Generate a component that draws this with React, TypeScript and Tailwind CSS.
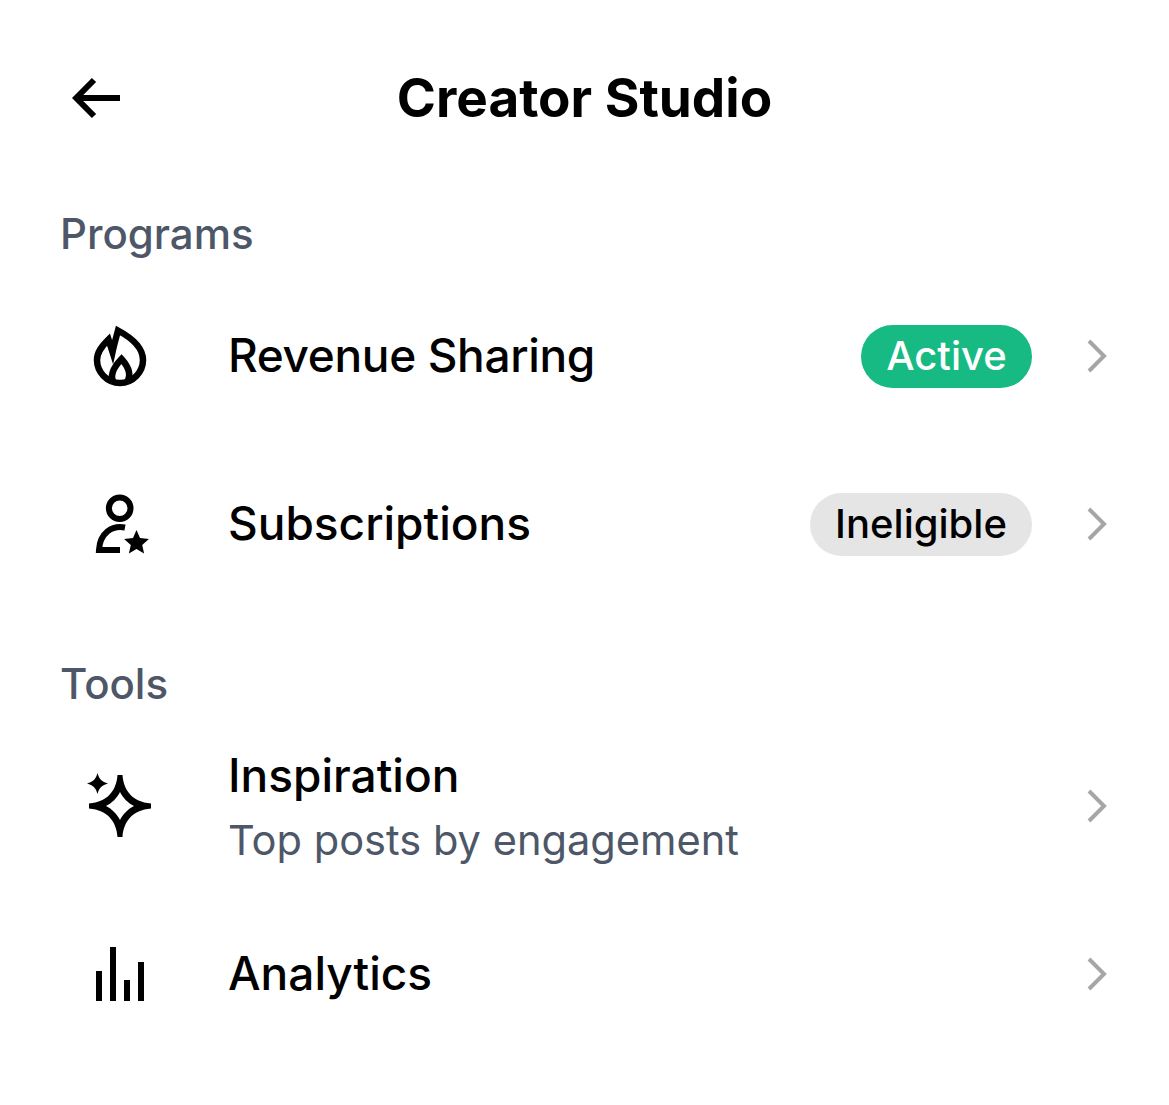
import type { ReactNode } from 'react';

function Chevron() {
  return (
    <svg width="24" height="36" viewBox="0 0 24 36" fill="none" className="shrink-0">
      <path d="M4 3L19 18L4 33" stroke="#a6a6a6" strokeWidth="4" />
    </svg>
  );
}

function FlameIcon() {
  return (
    <svg width="72" height="72" viewBox="0 0 72 72" fill="none" stroke="#000" strokeWidth="6.5" strokeMiterlimit="10">
      <path d="M36 63C23 63 13 52 13 40C13 32 18 26 24.5 19.5L28.5 32C30 25 32 18 34 10.5C48 18 59 28 59 40C59 52 49 63 36 63Z" />
      <path d="M29.5 62C26 56 29 48 37.5 39C45.5 48 47 56 43 62" />
    </svg>
  );
}

function CreatorIcon() {
  return (
    <svg width="72" height="72" viewBox="0 0 72 72" fill="none">
      <circle cx="35.7" cy="20.3" r="10.8" stroke="#000" strokeWidth="6" />
      <path d="M41 39.5C28 37 16 45 15 62H36" stroke="#000" strokeWidth="6" />
      <polygon
        points="52.5,42 56,50.1 64.9,51 58.2,56.9 60.1,65.5 52.5,61 44.9,65.5 46.8,56.9 40.1,51 49,50.1"
        fill="#000"
      />
    </svg>
  );
}

function SparkleIcon() {
  return (
    <svg width="72" height="72" viewBox="0 0 72 72" fill="none">
      <path
        fillRule="evenodd"
        d="M33.5 5H38.5C39.5 20 48 32 67 33.5V38.5C48 40 39.5 52 38.5 67H33.5C32.5 52 24 40 5 38.5V33.5C24 32 32.5 20 33.5 5ZM36 22C39 28 44 33 50 36C44 39 39 44 36 50C33 44 28 39 22 36C28 33 33 28 36 22Z"
        fill="#000"
      />
      <path d="M13.5 3C15 9 18 12 24 13.5C18 15 15 18 13.5 24C12 18 9 15 3 13.5C9 12 12 9 13.5 3Z" fill="#000" />
    </svg>
  );
}

function BarsIcon() {
  return (
    <svg width="72" height="72" viewBox="0 0 72 72" fill="#000">
      <rect x="12" y="33" width="6" height="30" />
      <rect x="26" y="9" width="6" height="54" />
      <rect x="40" y="42" width="6" height="21" />
      <rect x="54" y="24" width="6" height="39" />
    </svg>
  );
}

function Row({
  icon,
  title,
  subtitle,
  badge,
  titleClass = '',
}: {
  icon: ReactNode;
  title: string;
  subtitle?: string;
  badge?: ReactNode;
  titleClass?: string;
}) {
  return (
    <div className="flex h-[168px] items-center pr-[60px] pl-[84px]">
      <div className="flex w-[72px] shrink-0 justify-center">{icon}</div>
      <div className={subtitle ? 'ml-[72px] flex-1 pt-[4px]' : 'ml-[72px] flex-1 pb-[2px]'}>
        <div className={`text-[46px] leading-[64px] font-medium text-black ${titleClass}`}>{title}</div>
        {subtitle && <div className="text-[41.6px] leading-[66px] text-[#4d5768]">{subtitle}</div>}
      </div>
      {badge}
      <div className="ml-[53px]">
        <Chevron />
      </div>
    </div>
  );
}

export default function App() {
  return (
    <div className="h-[1105px] w-[1169px] bg-white font-['Inter',sans-serif]">
      <header className="relative flex h-[196px] items-center justify-center pt-[2px]">
        <svg
          width="52"
          height="48"
          viewBox="0 0 52 48"
          fill="none"
          stroke="#000"
          strokeWidth="6"
          className="absolute top-[74px] left-[72px]"
        >
          <path d="M22 6L4.2 24L22 42" />
          <path d="M4.2 24H48" />
        </svg>
        <h1 className="text-[53px] font-bold text-black">Creator Studio</h1>
      </header>

      <section>
        <h2 className="flex h-[74px] items-center pl-[60px] text-[42px] font-medium text-[#4d5768]">Programs</h2>
        <div className="mt-[2px]">
          <Row
            icon={<FlameIcon />}
            title="Revenue Sharing"
            titleClass="tracking-[-0.35px]"
            badge={
              <span className="flex h-[63px] w-[171px] items-center justify-center rounded-full bg-[#17ba82] text-[40px] font-medium text-white">
                Active
              </span>
            }
          />
          <Row
            icon={<CreatorIcon />}
            title="Subscriptions"
            badge={
              <span className="flex h-[63px] w-[222px] items-center justify-center rounded-full bg-[#e5e5e5] text-[40px] font-medium text-black">
                Ineligible
              </span>
            }
          />
        </div>
      </section>

      <section className="mt-[38px]">
        <h2 className="flex h-[74px] items-center pl-[60px] text-[42px] font-medium text-[#4d5768]">Tools</h2>
        <div className="mt-[2px]">
          <Row icon={<SparkleIcon />} title="Inspiration" subtitle="Top posts by engagement" />
          <Row icon={<BarsIcon />} title="Analytics" />
        </div>
      </section>
    </div>
  );
}
